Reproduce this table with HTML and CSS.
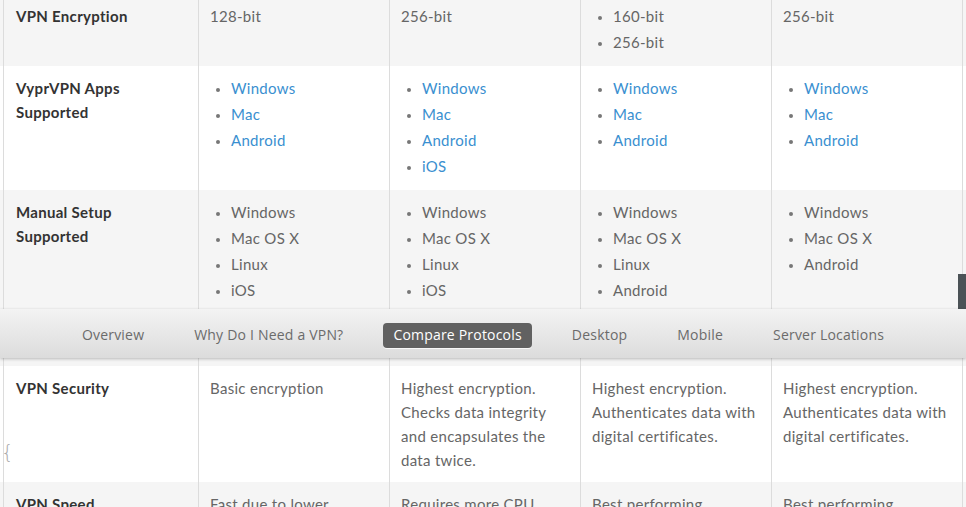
FILE: index.html
```html
<!DOCTYPE html>
<html>
<head>
<meta charset="utf-8">
<link rel="stylesheet" href="styles.css">
</head>
<body>
<div class="page">
  <div class="table">
    <div class="row shade">
      <div class="cell label">VPN Encryption</div>
      <div class="cell"><p>128-bit</p></div>
      <div class="cell"><p>256-bit</p></div>
      <div class="cell"><ul><li>160-bit</li><li>256-bit</li></ul></div>
      <div class="cell"><p>256-bit</p></div>
    </div>
    <div class="row">
      <div class="cell label">VyprVPN Apps Supported</div>
      <div class="cell"><ul><li><a href="#">Windows</a></li><li><a href="#">Mac</a></li><li><a href="#">Android</a></li></ul></div>
      <div class="cell"><ul><li><a href="#">Windows</a></li><li><a href="#">Mac</a></li><li><a href="#">Android</a></li><li><a href="#">iOS</a></li></ul></div>
      <div class="cell"><ul><li><a href="#">Windows</a></li><li><a href="#">Mac</a></li><li><a href="#">Android</a></li></ul></div>
      <div class="cell"><ul><li><a href="#">Windows</a></li><li><a href="#">Mac</a></li><li><a href="#">Android</a></li></ul></div>
    </div>
    <div class="row shade tall">
      <div class="cell label">Manual Setup Supported</div>
      <div class="cell"><ul><li>Windows</li><li>Mac OS X</li><li>Linux</li><li>iOS</li></ul></div>
      <div class="cell"><ul><li>Windows</li><li>Mac OS X</li><li>Linux</li><li>iOS</li></ul></div>
      <div class="cell"><ul><li>Windows</li><li>Mac OS X</li><li>Linux</li><li>Android</li></ul></div>
      <div class="cell"><ul><li>Windows</li><li>Mac OS X</li><li>Android</li></ul></div>
    </div>
    <div class="row">
      <div class="cell label">VPN Security</div>
      <div class="cell"><p>Basic encryption</p></div>
      <div class="cell"><p>Highest encryption. Checks data integrity and encapsulates the data twice.</p></div>
      <div class="cell"><p>Highest encryption. Authenticates data with digital certificates.</p></div>
      <div class="cell"><p>Highest encryption. Authenticates data with digital certificates.</p></div>
    </div>
    <div class="row shade">
      <div class="cell label">VPN Speed</div>
      <div class="cell"><p>Fast due to lower encryption overhead.</p></div>
      <div class="cell"><p>Requires more CPU processing to encapsulate data.</p></div>
      <div class="cell"><p>Best performing connection speeds.</p></div>
      <div class="cell"><p>Best performing connection speeds.</p></div>
    </div>
  </div>

  <div class="sidetab"></div>

  <nav class="subnav">
    <a class="nav-item" href="#">Overview</a>
    <a class="nav-item" href="#">Why Do I Need a VPN?</a>
    <a class="nav-item active" href="#">Compare Protocols</a>
    <a class="nav-item" href="#">Desktop</a>
    <a class="nav-item" href="#">Mobile</a>
    <a class="nav-item" href="#">Server Locations</a>
  </nav>

  <span class="brace">{</span>
</div>
</body>
</html>
```

FILE: styles.css
```css
html, body {
  margin: 0;
  padding: 0;
  background: #ffffff;
}
body {
  width: 966px;
  height: 507px;
  overflow: hidden;
  font-family: "Lato", "Liberation Sans", sans-serif;
  font-size: 15px;
  letter-spacing: 0.3px;
  color: #666666;
}
.page {
  position: relative;
  width: 966px;
  height: 507px;
  overflow: hidden;
}
.table {
  margin-top: -6px;
}
.row {
  display: grid;
  grid-template-columns: 195px 191px 191px 191px 192px;
  padding: 0 3px;
  background: #ffffff;
}
.row.shade {
  background: #f5f5f5;
}
.row.tall {
  min-height: 176px;
}
.cell {
  border-left: 1px solid #dcdcdc;
  padding: 10px 10px 10px 11px;
  line-height: 24px;
}
.cell:last-child {
  border-right: 1px solid #dcdcdc;
}
.cell.label {
  font-weight: 700;
  color: #333333;
  padding-left: 12px;
  padding-right: 20px;
}
.cell p {
  margin: 0;
}
.cell ul {
  margin: -1px 0 1px;
  padding: 0 0 0 21px;
}
.cell li {
  line-height: 26px;
}
.cell li::marker {
  color: #777777;
  font-size: 12px;
}
.cell a {
  color: #3a8fd0;
  text-decoration: none;
}
.sidetab {
  position: absolute;
  right: 0;
  top: 274px;
  width: 8px;
  height: 60px;
  background: #4b5256;
}
.subnav {
  position: absolute;
  left: 0;
  top: 309px;
  width: 966px;
  height: 49px;
  box-sizing: border-box;
  padding-top: 4px;
  display: flex;
  justify-content: center;
  align-items: center;
  gap: 30px;
  background: linear-gradient(#f3f3f3, #dcdcdc);
  box-shadow: 0 1px 3px rgba(0, 0, 0, 0.25);
  font-family: "Open Sans", "DejaVu Sans", sans-serif;
  font-size: 14px;
  letter-spacing: 0.2px;
}
.nav-item {
  display: block;
  padding: 3px 10px 4px;
  color: #6b6b6b;
  text-decoration: none;
  border-radius: 4px;
  line-height: 18px;
}
.nav-item.active {
  background: #616161;
  color: #ffffff;
  box-shadow: 0 1px 0 #f8f8f8;
}
.brace {
  position: absolute;
  left: 1px;
  top: 440px;
  font-family: "DejaVu Sans", sans-serif;
  font-weight: 200;
  font-size: 20px;
  color: #aaaaaa;
  line-height: 24px;
}
```
